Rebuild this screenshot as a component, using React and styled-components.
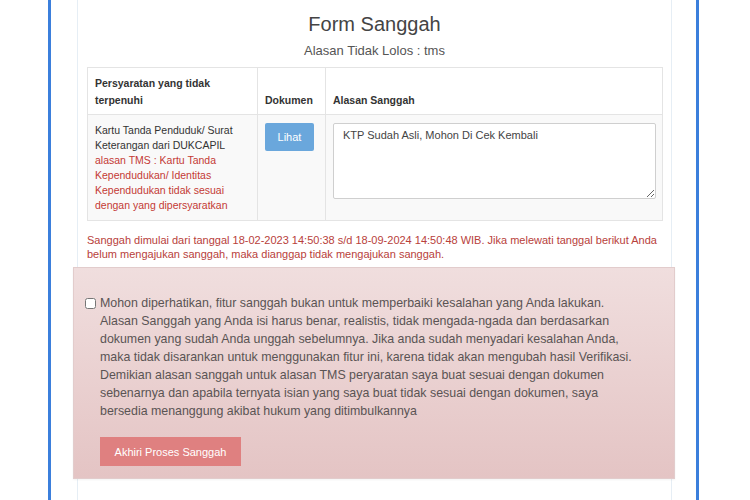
import styled, {createGlobalStyle} from 'styled-components';

const GlobalStyle = createGlobalStyle`
  html, body {
    margin: 0;
    padding: 0;
    background: #ffffff;
    font-family: "Liberation Sans", Arial, sans-serif;
  }
`;

const Page = styled.div`
  width: 750px;
  height: 500px;
  overflow: hidden;
  background: #fff;
`;

const Frame = styled.div`
  margin-left: 48px;
  width: 595px;
  height: 500px;
  border-left: 3px solid #3b7fdc;
  border-right: 3px solid #3b7fdc;
  padding: 0 24px 0 26px;
`;

const Card = styled.div`
  height: 100%;
  border-left: 1px solid #e6eef5;
  border-right: 1px solid #e6eef5;
  padding: 0 9px;
  box-sizing: border-box;
`;

const Title = styled.h3`
  margin: 0;
  padding-top: 12px;
  text-align: center;
  font-size: 20px;
  line-height: 24px;
  font-weight: normal;
  color: #444;
`;

const Subtitle = styled.p`
  margin: 7px 0 0;
  text-align: center;
  font-size: 13px;
  line-height: 16px;
  color: #555;
`;

const Table = styled.table`
  margin-top: 8px;
  width: 576px;
  table-layout: fixed;
  border-collapse: collapse;
  font-size: 10.5px;
  color: #333;
`;

const Th = styled.th`
  box-sizing: border-box;
  border: 1px solid #e4e4e4;
  text-align: left;
  vertical-align: bottom;
  padding: 7px 7px 5px;
  font-weight: bold;
  line-height: 17px;
  width: ${({w}) => (w ? `${w}px` : 'auto')};
`;

const Td = styled.td`
  border: 1px solid #e4e4e4;
  background: #f9f9f9;
  vertical-align: top;
  padding: 8px 7px 7px;
  line-height: 15px;
`;

const Red = styled.span`
  color: #c43a35;
`;

const InfoButton = styled.button`
  display: block;
  width: 49px;
  height: 28px;
  border: none;
  border-radius: 2px;
  background: #6aa7dc;
  color: #fff;
  font-family: inherit;
  font-size: 11px;
  padding: 0;
`;

const TextArea = styled.textarea`
  display: block;
  width: 323px;
  height: 76px;
  box-sizing: border-box;
  border: 1px solid #cfcfcf;
  border-radius: 2px;
  background: #fff;
  padding: 4px 9px;
  font-family: inherit;
  font-size: 11px;
  line-height: 15px;
  color: #444;
  resize: vertical;
  margin-bottom: 10px;
`;

const Notice = styled.p`
  margin: 12px 0 0;
  font-size: 11px;
  line-height: 14px;
  color: #b8413b;
  white-space: nowrap;
`;

const Alert = styled.div`
  margin: 6px -13px 0 -14px;
  height: 212px;
  box-sizing: border-box;
  padding: 26px 12px 0 11px;
  background: linear-gradient(#f0dede, #e4c4c4);
  border: 1px solid #e2cccc;
  box-shadow: 0 1px 2px rgba(0, 0, 0, 0.05);
`;

const CheckRow = styled.label`
  display: flex;
  gap: 4px;
  font-size: 12.4px;
  line-height: 18px;
  color: #5a5454;
  white-space: nowrap;
`;

const Box = styled.input`
  margin: 4px 0 0;
  width: 11px;
  height: 11px;
  flex: none;
`;

const DangerButton = styled.button`
  margin: 17px 0 0 15px;
  width: 141px;
  height: 29px;
  border: none;
  background: #df8080;
  color: #fff;
  font-family: inherit;
  font-size: 11px;
  padding: 0;
`;

export default function App() {
  return (
    <Page>
      <GlobalStyle />
      <Frame>
        <Card>
          <Title>Form Sanggah</Title>
          <Subtitle>Alasan Tidak Lolos : tms</Subtitle>
          <Table>
            <thead>
              <tr>
                <Th w={170}>
                  Persyaratan yang tidak
                  <br />
                  terpenuhi
                </Th>
                <Th w={68}>Dokumen</Th>
                <Th>Alasan Sanggah</Th>
              </tr>
            </thead>
            <tbody>
              <tr>
                <Td>
                  Kartu Tanda Penduduk/ Surat
                  <br />
                  Keterangan dari DUKCAPIL
                  <br />
                  <Red>
                    alasan TMS : Kartu Tanda
                    <br />
                    Kependudukan/ Identitas
                    <br />
                    Kependudukan tidak sesuai
                    <br />
                    dengan yang dipersyaratkan
                  </Red>
                </Td>
                <Td>
                  <InfoButton>Lihat</InfoButton>
                </Td>
                <Td>
                  <TextArea defaultValue="KTP Sudah Asli, Mohon Di Cek Kembali" />
                </Td>
              </tr>
            </tbody>
          </Table>
          <Notice>
            Sanggah dimulai dari tanggal 18-02-2023 14:50:38 s/d 18-09-2024 14:50:48 WIB. Jika melewati tanggal berikut Anda
            <br />
            belum mengajukan sanggah, maka dianggap tidak mengajukan sanggah.
          </Notice>
          <Alert>
            <CheckRow>
              <Box type="checkbox" />
              <span>
                Mohon diperhatikan, fitur sanggah bukan untuk memperbaiki kesalahan yang Anda lakukan.
                <br />
                Alasan Sanggah yang Anda isi harus benar, realistis, tidak mengada-ngada dan berdasarkan
                <br />
                dokumen yang sudah Anda unggah sebelumnya. Jika anda sudah menyadari kesalahan Anda,
                <br />
                maka tidak disarankan untuk menggunakan fitur ini, karena tidak akan mengubah hasil Verifikasi.
                <br />
                Demikian alasan sanggah untuk alasan TMS peryaratan saya buat sesuai dengan dokumen
                <br />
                sebenarnya dan apabila ternyata isian yang saya buat tidak sesuai dengan dokumen, saya
                <br />
                bersedia menanggung akibat hukum yang ditimbulkannya
              </span>
            </CheckRow>
            <DangerButton>Akhiri Proses Sanggah</DangerButton>
          </Alert>
        </Card>
      </Frame>
    </Page>
  );
}
